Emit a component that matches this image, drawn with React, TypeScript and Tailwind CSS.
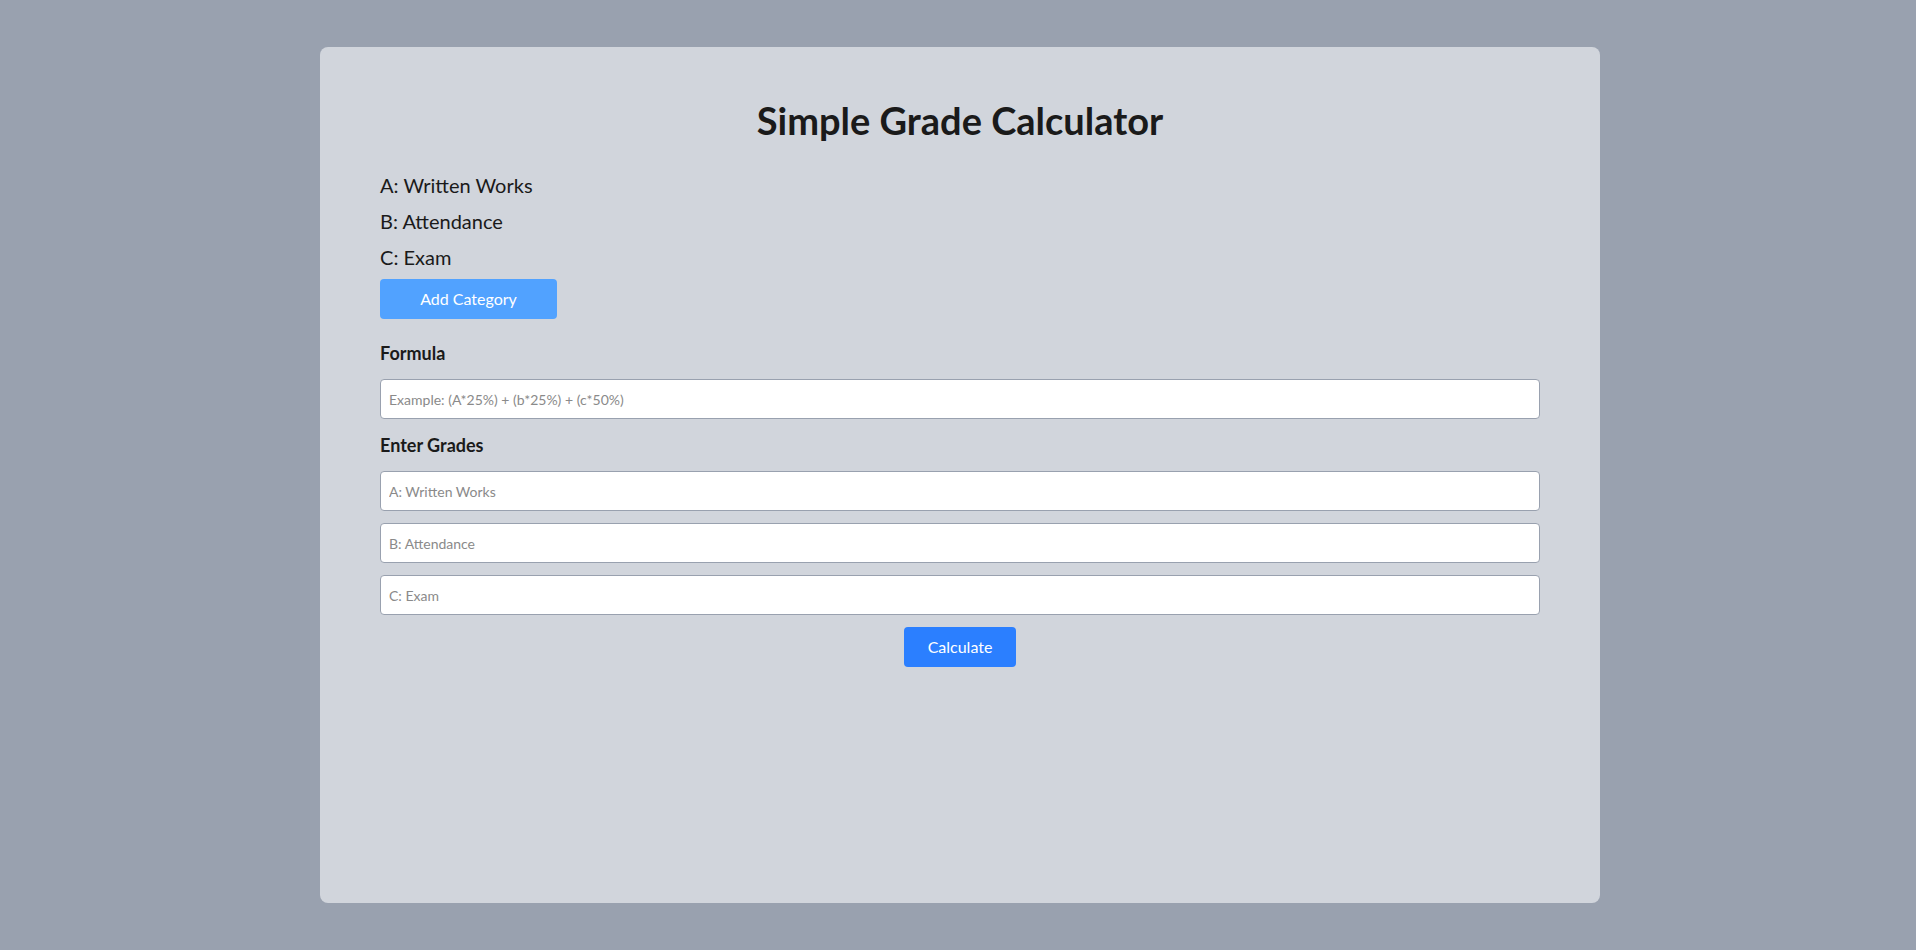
import { useState } from 'react'

type Category = { key: string; name: string }

export default function App() {
    const [categories] = useState<Category[]>([
        { key: 'A', name: 'Written Works' },
        { key: 'B', name: 'Attendance' },
        { key: 'C', name: 'Exam' },
    ])
    const [formula, setFormula] = useState('')
    const [grades, setGrades] = useState<Record<string, string>>({})

    return (
        <div className="h-screen flex items-center pl-1 bg-gray-400 font-['Lato','Open_Sans',sans-serif] text-[#1a1a1a]">
            <div className="mx-auto w-[1280px] h-[856px] bg-gray-300 rounded-lg px-[60px] pt-[53px]">
                <h1 className="text-[38px] leading-10 font-bold text-center mb-[31px]">Simple Grade Calculator</h1>

                <div className="flex flex-col items-start gap-2">
                    {categories.map((c) => (
                        <p key={c.key} className="text-xl">
                            {c.key}: {c.name}
                        </p>
                    ))}
                    <button className="w-[177px] h-10 rounded bg-blue-400 text-white text-base">Add Category</button>
                </div>

                <div className="flex flex-col gap-3 mt-5">
                    <h2 className="text-lg font-bold">Formula</h2>
                    <input
                        value={formula}
                        onChange={(e) => setFormula(e.target.value)}
                        placeholder="Example: (A*25%) + (b*25%) + (c*50%)"
                        className="h-10 w-full px-2 bg-white border border-gray-400 rounded text-sm placeholder:text-[#8a8a8a]"
                    />

                    <h2 className="text-lg font-bold">Enter Grades</h2>
                    {categories.map((c) => (
                        <input
                            key={c.key}
                            value={grades[c.key] ?? ''}
                            onChange={(e) => setGrades({ ...grades, [c.key]: e.target.value })}
                            placeholder={`${c.key}: ${c.name}`}
                            className="h-10 w-full px-2 bg-white border border-gray-400 rounded text-sm placeholder:text-[#8a8a8a]"
                        />
                    ))}

                    <button className="self-center h-10 px-6 rounded bg-blue-500 text-white text-base">Calculate</button>
                </div>
            </div>
        </div>
    )
}
